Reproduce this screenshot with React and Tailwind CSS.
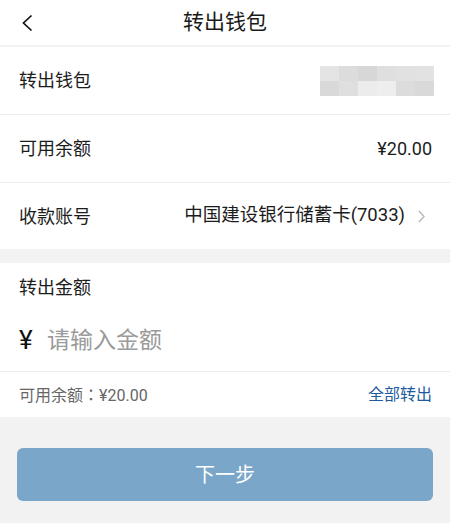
const MOSAIC = [
  ['#e4e4e4', '#dcdcdc', '#d7d7d7', '#dfdfdf', '#e1e1e1', '#e2e2e2'],
  ['#d9d9d9', '#dfdfdf', '#ececec', '#eeeeee', '#dcdcdc', '#d9d9d9'],
];

function Row({ label, children, last = false }) {
  return (
    <div
      className={[
        'flex items-center justify-between pl-[19px] pr-[18px] bg-white',
        last ? 'h-[66px]' : 'h-[68px] border-b border-[#ececec]',
      ].join(' ')}
    >
      <span className="text-[18px] text-[#1c1c1c]">{label}</span>
      {children}
    </div>
  );
}

export default function App() {
  return (
    <div
      className="w-[450px] h-[523px] bg-[#f2f2f2] flex flex-col overflow-hidden"
      style={{ fontFamily: 'Roboto, "Noto Sans CJK SC", sans-serif' }}
    >
      <header className="relative h-[47px] shrink-0 bg-white border-b-2 border-[#f3f3f3] flex items-center justify-center">
        <svg
          className="absolute left-[20px] top-[13px]"
          width="14"
          height="20"
          viewBox="0 0 14 20"
          fill="none"
          stroke="#111"
          strokeWidth="1.7"
        >
          <path d="M11.5 2.5 L3.5 10 L11.5 17.5" />
        </svg>
        <h1 className="text-[21px] text-[#1a1a1a] leading-none">转出钱包</h1>
      </header>

      <Row label="转出钱包">
        <div className="grid grid-cols-6 w-[114px] mr-[-2px]">
          {MOSAIC.flat().map((c, i) => (
            <div key={i} className="h-[15px]" style={{ background: c }} />
          ))}
        </div>
      </Row>
      <Row label="可用余额">
        <span className="text-[18px] text-[#1c1c1c]">¥20.00</span>
      </Row>
      <Row label="收款账号" last>
        <div className="flex items-center gap-[13px] mr-[7px]">
          <span className="text-[18.5px] text-[#1c1c1c]">中国建设银行储蓄卡(7033)</span>
          <svg width="7" height="13" viewBox="0 0 7 13" fill="none" stroke="#b5b5b5" strokeWidth="1.3">
            <path d="M1 1 L6 6.5 L1 12" />
          </svg>
        </div>
      </Row>

      <div className="h-[14px] shrink-0" />

      <section className="bg-white shrink-0">
        <div className="h-[46px] flex items-end px-[19px] pb-[12px]">
          <span className="text-[18px] text-[#1c1c1c] leading-none">转出金额</span>
        </div>
        <div className="h-[63px] flex items-center px-[19px] border-b border-[#ececec]">
          <span className="text-[26px] text-[#111] w-[28px] leading-none">¥</span>
          <span className="text-[23px] text-[#9a9a9a] leading-none">请输入金额</span>
        </div>
        <div className="h-[45px] flex items-center justify-between pl-[19px] pr-[18px]">
          <span className="text-[16px] text-[#666]">
            可用余额
            <span style={{ fontFamily: '"Noto Sans CJK JP", sans-serif' }}>：</span>
            ¥20.00
          </span>
          <span className="text-[16px] text-[#1e5a9c]">全部转出</span>
        </div>
      </section>

      <div className="px-[17px] pt-[31px]">
        <button className="w-full h-[53px] rounded-[6px] bg-[#79a6c9] text-white text-[20px] flex items-center justify-center">
          下一步
        </button>
      </div>
    </div>
  );
}
